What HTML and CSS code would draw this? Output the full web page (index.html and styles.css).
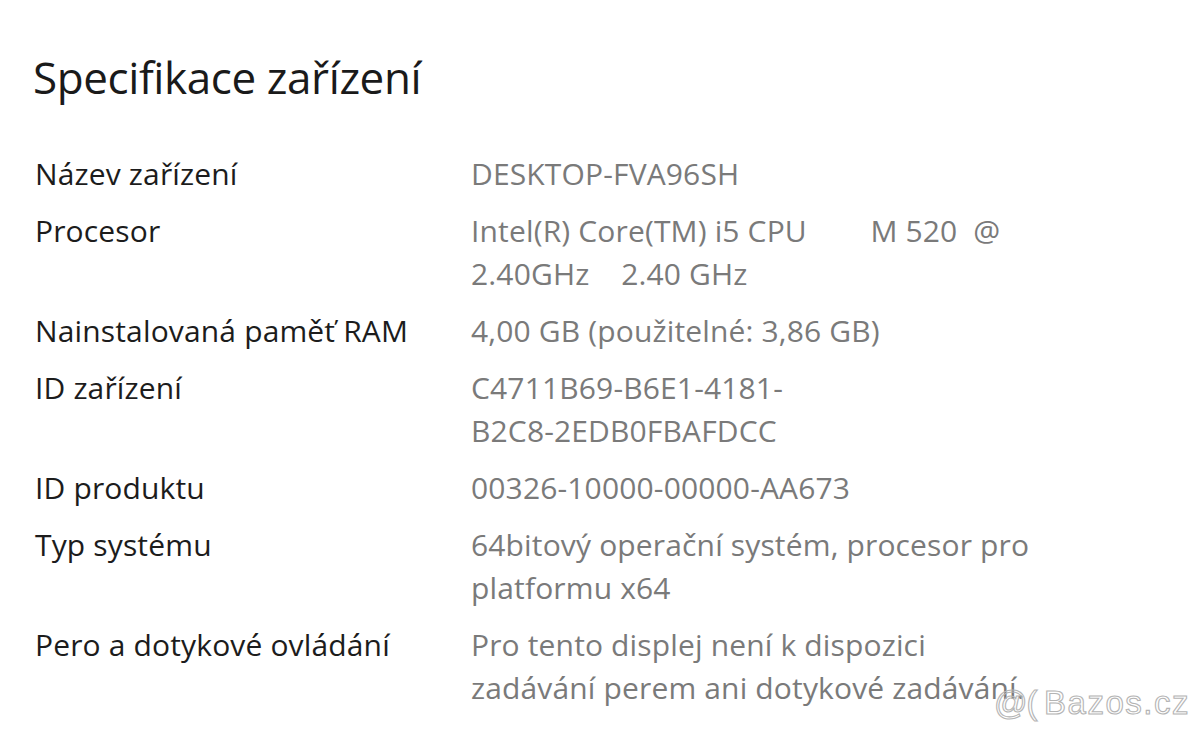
FILE: index.html
```html
<!DOCTYPE html>
<html lang="cs">
<head>
<meta charset="utf-8">
<title>Specifikace zařízení</title>
<link rel="stylesheet" href="styles.css">
</head>
<body>
<main class="page">
  <h1 class="title">Specifikace zařízení</h1>
  <dl class="specs">
    <dt>Název zařízení</dt>
    <dd>DESKTOP-FVA96SH</dd>
    <dt>Procesor</dt>
    <dd>Intel(R) Core(TM) i5 CPU&nbsp;&nbsp;&nbsp;&nbsp;&nbsp;&nbsp;&nbsp;&nbsp;M 520&nbsp;&nbsp;@<br>2.40GHz&nbsp;&nbsp;&nbsp;&nbsp;2.40 GHz</dd>
    <dt>Nainstalovaná paměť RAM</dt>
    <dd>4,00 GB (použitelné: 3,86 GB)</dd>
    <dt>ID zařízení</dt>
    <dd>C4711B69-B6E1-4181-<br>B2C8-2EDB0FBAFDCC</dd>
    <dt>ID produktu</dt>
    <dd>00326-10000-00000-AA673</dd>
    <dt>Typ systému</dt>
    <dd>64bitový operační systém, procesor pro<br>platformu x64</dd>
    <dt>Pero a dotykové ovládání</dt>
    <dd>Pro tento displej není k dispozici<br>zadávání perem ani dotykové zadávání.</dd>
  </dl>
  <div class="watermark"><span class="wm-at">@(</span> Bazos.cz</div>
</main>
</body>
</html>
```

FILE: styles.css
```css
html, body {
  margin: 0;
  padding: 0;
  background: #ffffff;
}

.page {
  position: relative;
  width: 1200px;
  height: 731px;
  overflow: hidden;
  padding: 0 0 0 35px;
  box-sizing: border-box;
  font-family: "Open Sans", "Noto Sans", sans-serif;
}

.title {
  margin: 0;
  padding-top: 45px;
  margin-left: -2px;
  font-size: 44px;
  font-weight: 400;
  line-height: 64px;
  color: #1a1a1a;
  letter-spacing: -0.4px;
}

.specs {
  display: grid;
  grid-template-columns: 436px 1fr;
  row-gap: 14px;
  margin: 43px 0 0 0;
  font-size: 30px;
  line-height: 43px;
  letter-spacing: 0.15px;
}

.specs dt {
  color: #1c1c1c;
}

.specs dd {
  margin: 0;
  color: #7a7a7a;
}

.watermark {
  position: absolute;
  right: 10px;
  bottom: 12px;
  font-family: "Liberation Sans", Arial, sans-serif;
  font-size: 33px;
  line-height: 1;
  color: transparent;
  -webkit-text-stroke: 1.1px #b4b4b4;
  letter-spacing: 1.5px;
  word-spacing: -3px;
}

.wm-at {
  letter-spacing: -1px;
}
```
